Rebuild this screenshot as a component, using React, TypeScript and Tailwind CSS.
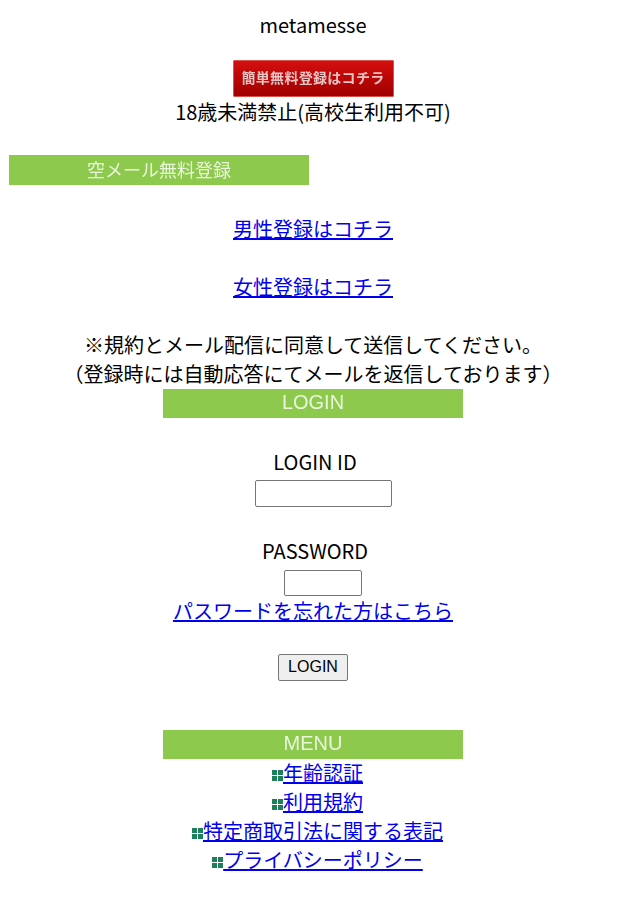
// App.tsx
const bodyFont = "font-['Noto_Sans_CJK_JP','Noto_Sans',sans-serif]";

function GreenBar({ label, cjk }: { label: string; cjk?: boolean }) {
  return (
    <div
      className={`w-[300px] bg-[#8cc94c] text-center text-[#eaf5dc] ${
        cjk
          ? "h-[30px] text-[18px] leading-[29px] font-['Noto_Sans_CJK_JP',sans-serif]"
          : "h-[29px] text-[20px] leading-[27px] font-['Liberation_Sans',sans-serif]"
      }`}
    >
      <span className="inline-block blur-[0.35px]">{label}</span>
    </div>
  );
}

function Bullet() {
  return (
    <svg width="11" height="11" viewBox="0 0 11 11" className="inline-block align-[0px]">
      <rect x="0" y="0" width="5" height="5" fill="#1e7f5a" />
      <rect x="6" y="0" width="5" height="5" fill="#1e7f5a" />
      <rect x="0" y="6" width="5" height="5" fill="#1e7f5a" />
      <rect x="6" y="6" width="5" height="5" fill="#1e7f5a" />
    </svg>
  );
}

function TextLink({ children }: { children: string }) {
  return (
    <a href="#" className="text-[#0000ee] underline">
      {children}
    </a>
  );
}

const menuItems = ["年齢認証", "利用規約", "特定商取引法に関する表記", "プライバシーポリシー"];

export default function App() {
  return (
    <div className={`min-h-[920px] bg-white pt-[10px] pl-[9px] pr-[3px] text-[20px] leading-[29px] text-black ${bodyFont}`}>
      <div className="text-center">metamesse</div>

      <div className="mt-[21px] flex justify-center">
        <div className="flex h-[37px] w-[161px] items-center justify-center rounded-[1px] border border-[#d9534f] bg-gradient-to-b from-[#d40f0f] to-[#a00000] pb-[2px] text-[14px] tracking-[0.3px] font-bold text-[#e8c4c4] blur-[0.6px]">
          簡単無料登録はコチラ
        </div>
      </div>
      <div className="text-center">18歳未満禁止(高校生利用不可)</div>

      <div className="mt-[29px]">
        <GreenBar label="空メール無料登録" cjk />
      </div>

      <div className="mt-[29px] text-center">
        <TextLink>男性登録はコチラ</TextLink>
      </div>
      <div className="mt-[29px] text-center">
        <TextLink>女性登録はコチラ</TextLink>
      </div>
      <div className="mt-[29px] text-center">※規約とメール配信に同意して送信してください。</div>
      <div className="text-center">（登録時には自動応答にてメールを返信しております）</div>

      <div className="mt-px flex justify-center">
        <GreenBar label="LOGIN" />
      </div>

      <div className="mt-[29px] flex flex-col items-center">
        <div className="pl-[4px]">LOGIN ID</div>
        <input
          type="text"
          className="mt-[4px] ml-[20px] h-[27px] w-[137px] rounded-[2px] border border-[#767676] bg-white"
        />
        <div className="mt-[29px] pl-[4px]">PASSWORD</div>
        <input
          type="password"
          className="mt-[5px] ml-[20px] h-[26px] w-[78px] rounded-[2px] border border-[#767676] bg-white"
        />
        <div>
          <TextLink>パスワードを忘れた方はこちら</TextLink>
        </div>
        <button
          type="button"
          className="mt-[29px] h-[27px] w-[70px] rounded-[2px] border border-[#767676] bg-[#efefef] pb-[2px] text-[16px] leading-[20px] font-['Liberation_Sans',sans-serif]"
        >
          LOGIN
        </button>
      </div>

      <div className="mt-[49px] flex justify-center">
        <GreenBar label="MENU" />
      </div>
      <div className="-mt-px pl-[9px] text-center">
        {menuItems.map((item) => (
          <div key={item}>
            <Bullet />
            <TextLink>{item}</TextLink>
          </div>
        ))}
      </div>
    </div>
  );
}
